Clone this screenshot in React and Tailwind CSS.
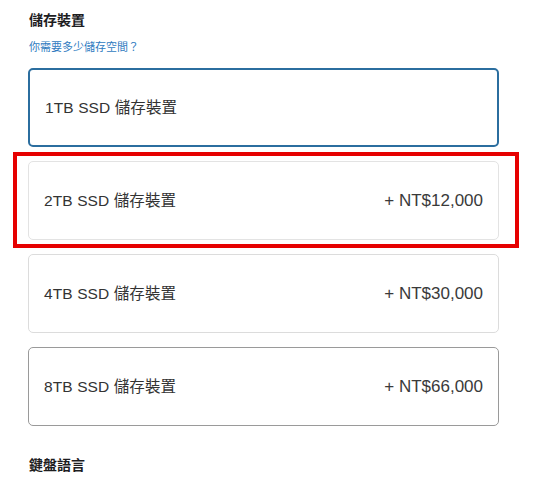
const OPTIONS = [
  { label: "1TB SSD 儲存裝置", price: null, state: "selected" },
  { label: "2TB SSD 儲存裝置", price: "+ NT$12,000", state: "marked" },
  { label: "4TB SSD 儲存裝置", price: "+ NT$30,000", state: "idle" },
  { label: "8TB SSD 儲存裝置", price: "+ NT$66,000", state: "hover" },
]

const borderFor = {
  selected: "border-2 border-[#2b6e9f]",
  marked: "border border-[#e3e3e3]",
  idle: "border border-[#dcdcdc]",
  hover: "border border-[#9a9a9a]",
}

function StorageOption({ option }) {
  return (
    <div className="relative">
      <button
        type="button"
        className={`flex h-[79px] w-full items-center justify-between rounded-[5px] bg-white pl-[15px] pr-[15px] text-left text-[#333] ${borderFor[option.state]}`}
      >
        <span className="text-[15.5px] tracking-[0.1px]">{option.label}</span>
        {option.price && <span className="text-[17px] text-[#3a3a3a]">{option.price}</span>}
      </button>
      {/* annotation box around the option */}
      {option.state === "marked" && (
        <div className="pointer-events-none absolute -top-[9px] -bottom-[8px] -left-[15px] -right-[20px] border-4 border-[#e60000]" />
      )}
    </div>
  )
}

export default function App() {
  return (
    <div
      className="h-[486px] w-[554px] overflow-hidden bg-white pl-[28px] pt-[10px]"
      style={{ fontFamily: '"Liberation Sans", "Noto Sans CJK TC", sans-serif' }}
    >
      <div className="w-[471px]">
        <h2 className="pl-[1px] text-[14px] leading-5 font-bold text-[#1d1d1f]">儲存裝置</h2>
        <a href="#" className="mt-[9px] block pl-[1px] text-[11px] leading-4 text-[#2f7bbf]">
          你需要多少儲存空間？
        </a>
        <div className="mt-[13px] flex flex-col gap-[14px]">
          {OPTIONS.map((o) => (
            <StorageOption key={o.label} option={o} />
          ))}
        </div>
        <h2 className="mt-[29px] pl-[1px] text-[14px] leading-5 font-bold text-[#1d1d1f]">鍵盤語言</h2>
        <a href="#" className="mt-[13px] block pl-[1px] text-[11px] leading-4 text-[#2f7bbf]">
          適合你的鍵盤
        </a>
      </div>
    </div>
  )
}
